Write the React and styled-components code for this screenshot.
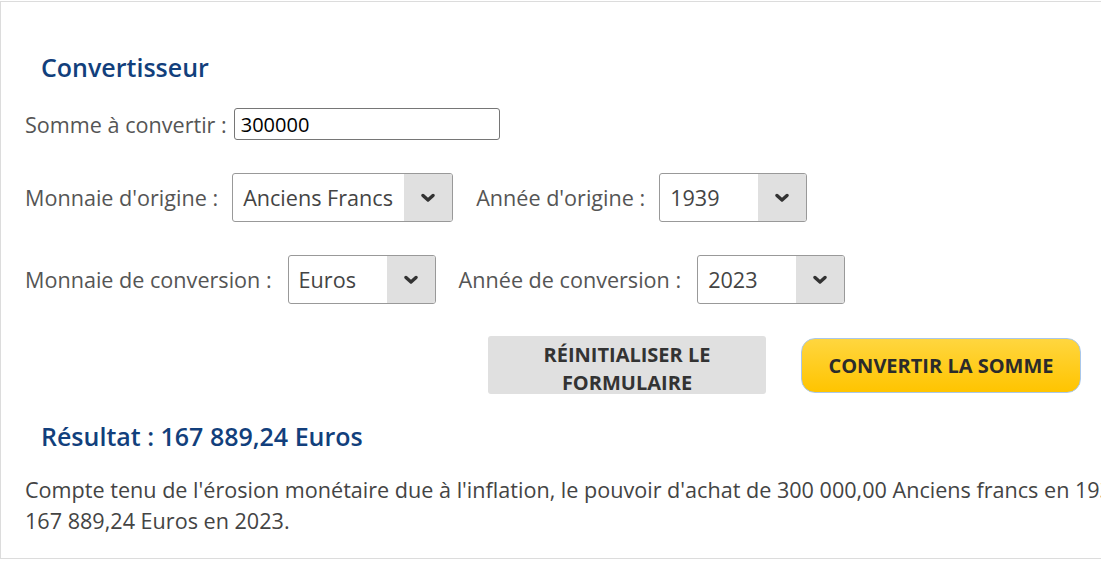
import React from "react";
import styled, { createGlobalStyle } from "styled-components";

const GlobalStyle = createGlobalStyle`
    body{
        margin:0;
        overflow:hidden;
        background:#fff;
        font-family:"Open Sans", "Liberation Sans", sans-serif;
    }
`;

const Box = styled.div`
    margin-top:1px;
    width:1300px;
    height:558px;
    box-sizing:border-box;
    border:1px solid #dcdcdc;
    padding:49px 0 0 24px;
`;

const Title = styled.h2`
    margin:0 0 25px 16px;
    font-size:25px;
    line-height:32px;
    font-weight:600;
    color:#123f7c;
`;

const Row = styled.div`
    display:flex;
    align-items:center;
    margin-bottom:${(props)=> props.gap || "33px"};
`;

const Label = styled.label`
    font-size:21.6px;
    color:#555;
    margin-right:${(props)=> props.space || "14px"};
    white-space:nowrap;
`;

const Field = styled.div`
    display:flex;
    align-items:center;
    margin-right:23px;
`;

const Input = styled.input`
    width:266px;
    height:32px;
    box-sizing:border-box;
    border:1px solid #767676;
    border-radius:3px;
    padding:0 6px;
    font-family:"Open Sans", sans-serif;
    font-size:20px;
    color:#000;
`;

const Select = styled.div`
    display:flex;
    width:${(props)=> props.width}px;
    height:49px;
    box-sizing:border-box;
    border:1px solid #999;
    border-radius:3px;
    overflow:hidden;
`;

const SelectValue = styled.div`
    flex:1;
    display:flex;
    align-items:center;
    padding-left:10px;
    font-size:21.6px;
    color:#444;
    white-space:nowrap;
`;

const Arrow = styled.div`
    width:48px;
    display:flex;
    align-items:center;
    justify-content:center;
    background:#e0e0e0;
    color:#333;
`;

const Buttons = styled.div`
    width:1056px;
    display:flex;
    justify-content:flex-end;
    align-items:center;
    gap:35px;
    margin-bottom:26px;
`;

const ResetButton = styled.button`
    width:278px;
    height:58px;
    border:none;
    border-radius:3px;
    background:#e0e0e0;
    color:#333;
    font-family:"Open Sans", sans-serif;
    font-weight:700;
    font-size:20px;
    line-height:28px;
    text-transform:uppercase;
    padding:5px 30px 0;
`;

const ConvertButton = styled.button`
    width:280px;
    height:55px;
    border:1px solid #a9c7ea;
    border-radius:14px;
    background:linear-gradient(#ffd63f, #ffc400);
    color:#2b2b2b;
    font-family:"Open Sans", sans-serif;
    font-weight:700;
    font-size:20px;
    text-transform:uppercase;
    padding:1px 0 0;
`;

const Result = styled.h3`
    margin:0 0 22px 16px;
    font-size:25px;
    line-height:32px;
    font-weight:600;
    color:#123f7c;
`;

const Text = styled.p`
    margin:0;
    font-size:21.6px;
    line-height:31px;
    color:#444;
    white-space:nowrap;
`;

const Chevron = () => (
    <svg width="14" height="10" viewBox="0 0 14 10">
        <polyline points="2,2.5 7,7 12,2.5" fill="none" stroke="#333" strokeWidth="3.4" strokeLinecap="round" strokeLinejoin="round"/>
    </svg>
);

const Dropdown = ({ value, width }) => (
    <Select width={width}>
        <SelectValue>{value}</SelectValue>
        <Arrow><Chevron/></Arrow>
    </Select>
);

const App = () => {
    return (
        <>
            <GlobalStyle/>
            <Box>
                <Title>Convertisseur</Title>
                <Row>
                    <Label space="7px">Somme à convertir :</Label>
                    <Input defaultValue="300000"/>
                </Row>
                <Row>
                    <Field>
                        <Label>Monnaie d'origine :</Label>
                        <Dropdown value="Anciens Francs" width={221}/>
                    </Field>
                    <Field>
                        <Label>Année d'origine :</Label>
                        <Dropdown value="1939" width={148}/>
                    </Field>
                </Row>
                <Row gap="32px">
                    <Field>
                        <Label space="16px">Monnaie de conversion :</Label>
                        <Dropdown value="Euros" width={148}/>
                    </Field>
                    <Field>
                        <Label space="16px">Année de conversion :</Label>
                        <Dropdown value="2023" width={148}/>
                    </Field>
                </Row>
                <Buttons>
                    <ResetButton>Réinitialiser le formulaire</ResetButton>
                    <ConvertButton>Convertir la somme</ConvertButton>
                </Buttons>
                <Result>Résultat : 167 889,24 Euros</Result>
                <Text>
                    Compte tenu de l'érosion monétaire due à l'inflation, le pouvoir d'achat de 300 000,00 Anciens francs en 1939 est égal à<br/>
                    167 889,24 Euros en 2023.
                </Text>
            </Box>
        </>
    );
};

export default App;
